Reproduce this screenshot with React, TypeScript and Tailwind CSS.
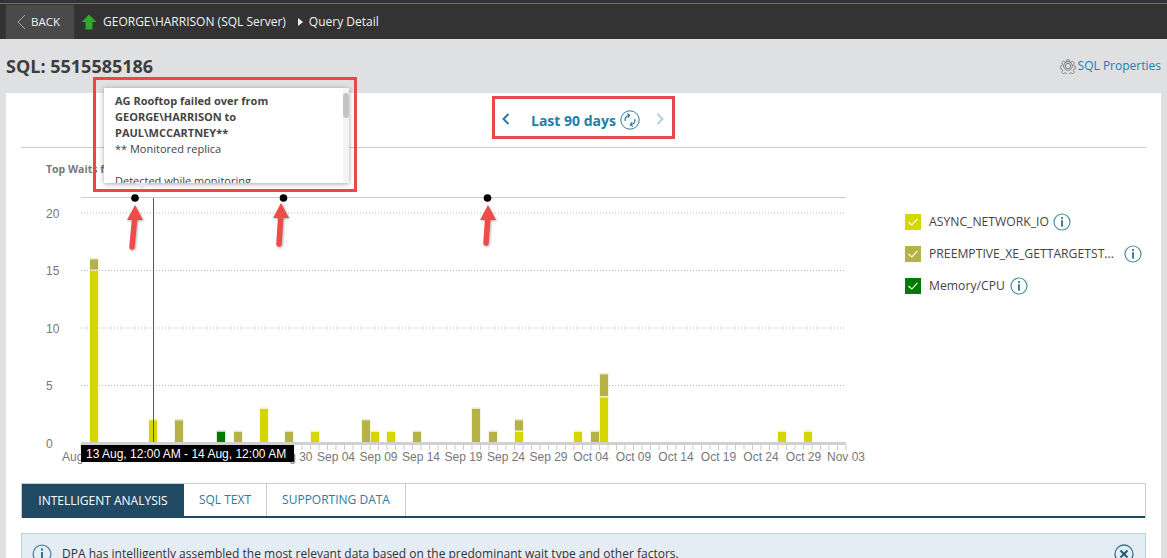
import { Fragment } from "react"

const YELLOW = "#d6d600"
const OLIVE = "#b5b347"
const GREEN = "#007a00"
const UNIT = 11.5
const BASE = 442

type Seg = [string, number]
const bars: { x: number; segs: Seg[] }[] = [
  { x: 90, segs: [[YELLOW, 15], [OLIVE, 1]] },
  { x: 149, segs: [[YELLOW, 2]] },
  { x: 175, segs: [[OLIVE, 2]] },
  { x: 217, segs: [[GREEN, 1]] },
  { x: 234, segs: [[OLIVE, 1]] },
  { x: 260, segs: [[YELLOW, 3]] },
  { x: 285, segs: [[OLIVE, 1]] },
  { x: 311, segs: [[YELLOW, 1]] },
  { x: 362, segs: [[OLIVE, 2]] },
  { x: 371, segs: [[YELLOW, 1]] },
  { x: 387, segs: [[YELLOW, 1]] },
  { x: 413, segs: [[OLIVE, 1]] },
  { x: 472, segs: [[OLIVE, 3]] },
  { x: 489, segs: [[OLIVE, 1]] },
  { x: 515, segs: [[YELLOW, 1], [OLIVE, 1]] },
  { x: 574, segs: [[YELLOW, 1]] },
  { x: 591, segs: [[OLIVE, 1]] },
  { x: 600, segs: [[YELLOW, 4], [OLIVE, 2]] },
  { x: 778, segs: [[YELLOW, 1]] },
  { x: 804, segs: [[YELLOW, 1]] },
]

// labels between Aug 05 and Aug 30 sit fully under the black hover label, so they are left out
const xLabels: [string, number][] = [["Aug 05", 0], ["Aug 30", 5], ["Sep 04", 6], ["Sep 09", 7], ["Sep 14", 8], ["Sep 19", 9], ["Sep 24", 10], ["Sep 29", 11], ["Oct 04", 12], ["Oct 09", 13], ["Oct 14", 14], ["Oct 19", 15], ["Oct 24", 16], ["Oct 29", 17], ["Nov 03", 18]]
const yLabels: [string, number][] = [["20", 213], ["15", 270.5], ["10", 328], ["5", 385.5], ["0", 443]]
const ticks = Array.from({ length: 91 }, (_, i) => 81 + 8.5 * i)

function Chart() {
  return (
    <svg width="880" height="335" viewBox="21 148 880 335" className="shrink-0" style={{ fontFamily: "'Liberation Sans', Arial, sans-serif" }}>
      <text x="46" y="173" fontSize="10.5" fontWeight="700" fill="#777" style={{ fontFamily: "'Open Sans', sans-serif" }}>Top Waits for SQL</text>
      <line x1="81" x2="846" y1="197.5" y2="197.5" stroke="#ccc" />
      {yLabels.slice(0, 4).map(([, y]) => (
        <line key={y} x1="81" x2="846" y1={y} y2={y} stroke="#bbb" strokeDasharray="1 2" />
      ))}
      {yLabels.map(([label, y]) => (
        <text key={label} x="46" y={y + 4.5} fontSize="12" fill="#777">{label}</text>
      ))}
      {bars.map((bar) => {
        let top = BASE
        return (
          <Fragment key={bar.x}>
            {bar.segs.map(([color, units], i) => {
              const h = units * UNIT
              top -= h
              return (
                <Fragment key={i}>
                  <rect x={bar.x - 0.5} y={top} width="9" height={h} fill={color} opacity="0.3" />
                  <rect x={bar.x} y={top + 1.5} width="8" height={h - 1.5} fill={color} />
                </Fragment>
              )
            })}
          </Fragment>
        )
      })}
      <rect x="81" y="442" width="765" height="3" fill="#d0d0d0" />
      {ticks.map((x) => (
        <line key={x} x1={x} x2={x} y1="445" y2="450" stroke="#ccc" />
      ))}
      {xLabels.map(([label, i]) => (
        <text key={label} x={81 + 42.5 * i} y="461" fontSize="12" fill="#777" textAnchor="middle">{label}</text>
      ))}
      <line x1="153.5" x2="153.5" y1="198" y2="442" stroke="#555" />
      {[135, 283.5, 487.5].map((x) => (
        <circle key={x} cx={x} cy="198" r="3.8" fill="#000" />
      ))}
      <rect x="81" y="445" width="213" height="17" fill="#000" />
      <text x="86" y="458" fontSize="12" fill="#fff">13 Aug, 12:00 AM - 14 Aug, 12:00 AM</text>
    </svg>
  )
}

function InfoIcon({ size = 18 }: { size?: number }) {
  return (
    <svg width={size} height={size} viewBox="0 0 18 18" fill="none" className="shrink-0">
      <circle cx="9" cy="9" r="8" stroke="#4d8ba5" strokeWidth="1.2" />
      <rect x="8.1" y="4" width="1.8" height="1.9" fill="#2f7291" />
      <rect x="8.1" y="7.2" width="1.8" height="6.5" fill="#2f7291" />
    </svg>
  )
}

function LegendRow({ color, label, gap }: { color: string; label: string; gap: string }) {
  return (
    <div className="flex items-center h-[32px]">
      <span className="w-4 h-4 flex items-center justify-center shrink-0" style={{ backgroundColor: color }}>
        <svg width="12" height="10" viewBox="0 0 12 10" fill="none">
          <path d="M1.5 5 L4.8 8 L10.5 1.8" stroke="#fff" strokeWidth="1.1" />
        </svg>
      </span>
      <span className="ml-2 text-[12.2px] text-[#444]">{label}</span>
      <span className={gap}><InfoIcon /></span>
    </div>
  )
}

function Arrow({ x1, y1, x2, y2 }: { x1: number; y1: number; x2: number; y2: number }) {
  // tip at x1,y1 and tail at x2,y2, in page coordinates
  const left = Math.min(x1, x2) - 12
  const top = y1 - 2
  return (
    <svg
      width="26"
      height={y2 - y1 + 8}
      className="absolute drop-shadow-[1px_1px_1px_rgba(0,0,0,0.3)]"
      style={{ left, top }}
      viewBox={`${left} ${top} 26 ${y2 - y1 + 8}`}
      fill="none"
    >
      <line x1={x1} y1={y1 + 10} x2={x2} y2={y2} stroke="#ee4b4b" strokeWidth="5.5" strokeLinecap="round" />
      <path d={`M${x1} ${y1} L${x1 + 8} ${y1 + 15} L${x1 - 8} ${y1 + 15} Z`} fill="#ee4b4b" />
    </svg>
  )
}

export default function App() {
  return (
    <div className="relative h-[558px] overflow-hidden bg-[#dfe0e2] font-['Open_Sans',sans-serif]">
      <div className="h-[4px] bg-[#333] border-b border-[#3d7f94]" />
      <div className="h-[35px] bg-[#333] flex items-center pl-[6px] text-[#f2f2f2]">
        <div className="w-[68px] h-[34px] bg-[#4a4a4a] flex items-center pl-[11px] text-[11.5px]">
          <svg width="9" height="16" viewBox="0 0 9 16" fill="none">
            <path d="M8 1 L1 8 L8 15" stroke="#aaa" />
          </svg>
          <span className="ml-[5px]">BACK</span>
        </div>
        <svg width="16" height="16" viewBox="0 0 16 16" className="ml-[7px]">
          <path d="M8 0.5 L15.5 8 L11.5 8 L11.5 15.5 L4.5 15.5 L4.5 8 L0.5 8 Z" fill="#2fa82f" />
        </svg>
        <span className="ml-[6px] text-[12px]">GEORGE\HARRISON (SQL Server)</span>
        <span className="ml-3 w-0 h-0 border-y-[4px] border-y-transparent border-l-[5px] border-l-[#f2f2f2]" />
        <span className="ml-[6px] text-[12px]">Query Detail</span>
      </div>

      <div className="h-[54px] flex items-center justify-between px-[6px]">
        <h1 className="text-[18px] font-bold text-[#3d3d3d]">SQL: 5515585186</h1>
        <div className="flex items-center">
          <svg width="16" height="16" viewBox="0 0 24 24" fill="none" stroke="#777" strokeWidth="1.4">
            <circle cx="12" cy="12" r="4" />
            <circle cx="12" cy="12" r="6.5" />
            <path d="M10 1.5h4l.6 3 2.6 1.1 2.6-1.7 2.8 2.8-1.7 2.6 1.1 2.7 2.9.5v3.9l-3 .6-1 2.6 1.7 2.6-2.8 2.8-2.6-1.7-2.6 1.1-.6 3h-4l-.6-3-2.6-1.1-2.6 1.7-2.8-2.8 1.7-2.6-1.1-2.6-3-.6v-4l3-.6 1.1-2.6-1.7-2.6 2.8-2.8 2.6 1.7 2.6-1.1z" transform="translate(1.2 1.2) scale(.9)" />
          </svg>
          <span className="ml-[2px] text-[12px] text-[#1f7ea8]">SQL Properties</span>
        </div>
      </div>

      <div className="mx-[6px] h-[465px] bg-white px-[15px]">
        <div className="relative h-[55px] border-b border-[#ccc] flex items-center">
          <svg width="10" height="14" viewBox="0 0 10 14" fill="none" className="absolute left-[480px] top-[19px]">
            <path d="M7.5 2 L2.5 7 L7.5 12" stroke="#2a7ca0" strokeWidth="2" />
          </svg>
          <span className="ml-[510px] text-[14px] font-bold text-[#1f7ea8]">Last 90 days</span>
          <svg width="20" height="20" viewBox="0 0 20 20" fill="none" className="ml-[4px]">
            <circle cx="10" cy="10" r="9.2" stroke="#2a7ca0" />
            <path d="M5.2 11 A5 5 0 0 1 7 6 L9.5 5.2 M14.8 9 A5 5 0 0 1 13 14 L10.5 14.8" stroke="#2a7ca0" strokeWidth="1.2" />
            <path d="M7 3.4 L9.8 5.2 L7.8 7.8 M13 16.6 L10.2 14.8 L12.2 12.2" stroke="#2a7ca0" strokeWidth="1.1" />
          </svg>
          <svg width="10" height="14" viewBox="0 0 10 14" fill="none" className="absolute left-[634px] top-[19px]">
            <path d="M2.5 2 L7.5 7 L2.5 12" stroke="#b3d0dc" strokeWidth="2" />
          </svg>
        </div>

        <div className="flex h-[335px]">
          <Chart />
          <div className="ml-[4px] pt-[58px] flex-1">
            <LegendRow color={YELLOW} label="ASYNC_NETWORK_IO" gap="ml-[4px]" />
            <LegendRow color={OLIVE} label="PREEMPTIVE_XE_GETTARGETST..." gap="ml-[10px]" />
            <LegendRow color={GREEN} label="Memory/CPU" gap="ml-[5px]" />
          </div>
        </div>

        <div className="h-[35px] flex border border-[#ccc] border-b-0 shadow-[inset_0_-2px_0_#204a63] text-[12px] uppercase">
          <div className="w-[162px] bg-[#204a63] text-white flex items-center justify-center">Intelligent Analysis</div>
          <div className="w-[83px] border-r border-[#ccc] mb-[2px] text-[#2a7ca0] flex items-center justify-center">SQL Text</div>
          <div className="w-[139px] border-r border-[#ccc] mb-[2px] text-[#2a7ca0] flex items-center justify-center">Supporting Data</div>
        </div>

        <div className="mt-[15px] h-[40px] bg-[#e4edf3] border border-[#b5d3e0] flex items-start pt-[10px] pl-[10px] pr-[11px]">
          <InfoIcon size={20} />
          <span className="ml-[10px] text-[12px] text-[#333] leading-[20px] flex-1">DPA has intelligently assembled the most relevant data based on the predominant wait type and other factors.</span>
          <svg width="20" height="20" viewBox="0 0 20 20" fill="none">
            <circle cx="10" cy="10" r="9" stroke="#2f7291" strokeWidth="1.3" />
            <path d="M6.5 6.5 L13.5 13.5 M13.5 6.5 L6.5 13.5" stroke="#1f5f7d" strokeWidth="2" />
          </svg>
        </div>
      </div>

      {/* hover popover over the chart */}
      <div className="absolute left-[104px] top-[88px] w-[245px] h-[95px] bg-white shadow-[0_1px_5px_rgba(0,0,0,0.35)] overflow-hidden">
        <div className="pl-[11px] pr-[14px] pt-[5px] text-[11px] leading-[16px] text-[#444]">
          <p className="font-bold">AG Rooftop failed over from<br />GEORGE\HARRISON to<br />PAUL\MCCARTNEY**</p>
          <p>** Monitored replica</p>
          <p className="mt-4">Detected while monitoring</p>
        </div>
        <div className="absolute right-0 top-0 w-[6px] h-full bg-[#f4f4f4]">
          <div className="mt-[5px] h-[25px] rounded-full bg-[#c4c4c4]" />
        </div>
      </div>
      <div className="absolute left-[136px] top-[183px] w-0 h-0 border-x-[6px] border-x-transparent border-t-[6px] border-t-[#e4e4e4]" />

      {/* red review annotations drawn on the screenshot */}
      <div className="absolute left-[93px] top-[77px] w-[264px] h-[115px] border-[3px] border-[#e8484a]" />
      <div className="absolute left-[492px] top-[96px] w-[183px] h-[43px] border-[3px] border-[#e8484a]" />
      <Arrow x1={135} y1={205} x2={132} y2={247} />
      <Arrow x1={281} y1={203} x2={279} y2={244} />
      <Arrow x1={488} y1={205} x2={486} y2={243} />
    </div>
  )
}
